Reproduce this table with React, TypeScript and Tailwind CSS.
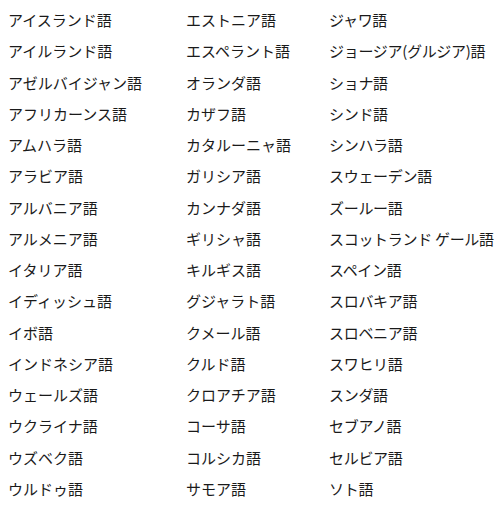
import React from "react";

const col1 = [
  "アイスランド語",
  "アイルランド語",
  "アゼルバイジャン語",
  "アフリカーンス語",
  "アムハラ語",
  "アラビア語",
  "アルバニア語",
  "アルメニア語",
  "イタリア語",
  "イディッシュ語",
  "イボ語",
  "インドネシア語",
  "ウェールズ語",
  "ウクライナ語",
  "ウズベク語",
  "ウルドゥ語",
];
const col2 = [
  "エストニア語",
  "エスペラント語",
  "オランダ語",
  "カザフ語",
  "カタルーニャ語",
  "ガリシア語",
  "カンナダ語",
  "ギリシャ語",
  "キルギス語",
  "グジャラト語",
  "クメール語",
  "クルド語",
  "クロアチア語",
  "コーサ語",
  "コルシカ語",
  "サモア語",
];
const col3 = [
  "ジャワ語",
  "ジョージア(グルジア)語",
  "ショナ語",
  "シンド語",
  "シンハラ語",
  "スウェーデン語",
  "ズールー語",
  "スコットランド ゲール語",
  "スペイン語",
  "スロバキア語",
  "スロベニア語",
  "スワヒリ語",
  "スンダ語",
  "セブアノ語",
  "セルビア語",
  "ソト語",
];

function Col({ items, className }: { items: string[]; className: string }) {
  return (
    <ul className={className}>
      {items.map((t) => (
        <li key={t} className="h-[31.27px] leading-[31.27px] whitespace-nowrap">
          {t}
        </li>
      ))}
    </ul>
  );
}

export default function App() {
  return (
    <div
      className="w-[500px] h-[506px] bg-white text-[#1a1a1a] text-[15px] pt-[4px] pl-[8px] flex overflow-hidden"
      style={{ fontFamily: '"Noto Sans CJK JP", "Noto Sans", sans-serif' }}
    >
      <Col items={col1} className="w-[178px] shrink-0" />
      <Col items={col2} className="w-[143px] shrink-0" />
      <Col items={col3} className="flex-1 tracking-[-0.3px]" />
    </div>
  );
}
